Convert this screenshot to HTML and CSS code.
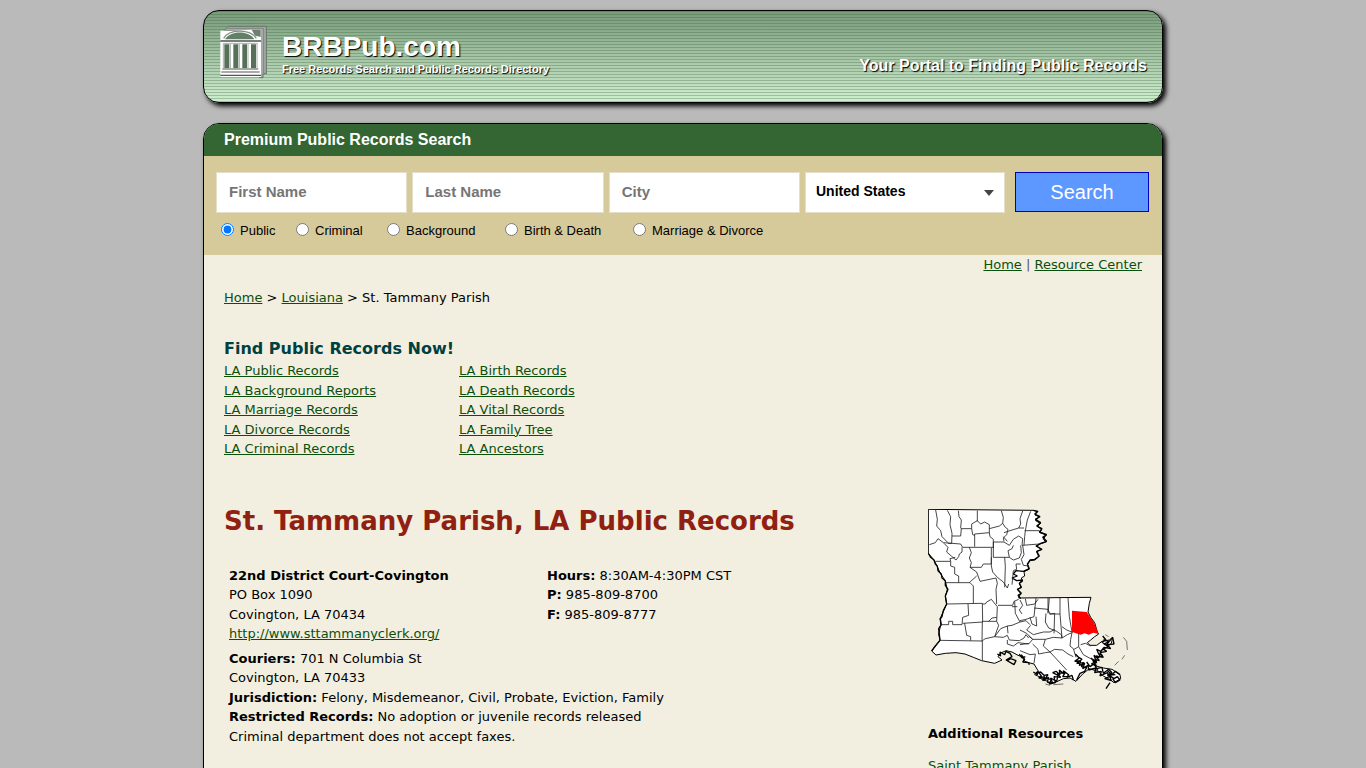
FILE: index.html
```html
<!DOCTYPE html>
<html lang="en">
<head>
<meta charset="utf-8">
<title>St. Tammany Parish, LA Public Records</title>
<link rel="stylesheet" href="styles.css">
</head>
<body>
<header class="banner">
  <svg class="logo" viewBox="0 0 144 162" aria-hidden="true">
    <path d="M18 14 28 4H142V146H132V158H122V17H18Z" fill="#a4aba5" stroke="#68726a" stroke-width="3"/>
    <path d="M26 10H134V150" fill="none" stroke="#7c877e" stroke-width="3"/>
    <path d="M98 17H122V40L108 34Z" fill="#6b806e"/>
    <path d="M4 17H38L98 14 108 32 126 36V156H4Z" fill="#fff"/>
    <path d="M14 40C30 12 92 10 112 40" fill="none" stroke="#858f87" stroke-width="4"/>
    <path d="M18 43C34 16 90 16 106 43Z" fill="#638066"/>
    <path d="M4 48H126" stroke="#4c544d" stroke-width="5"/>
    <path d="M12 55H116" stroke="#aab0ab" stroke-width="3"/>
    <path d="M16 58H31V130H16ZM43 58H58V130H43ZM70 58H84V130H70ZM96 58H111V130H96Z" fill="#56705a"/>
    <path d="M13 57V130M34 57V130M61 57V130M87 57V130M114 57V130" stroke="#a9afa9" stroke-width="3"/>
    <path d="M10 132H118M7 141H122" stroke="#8a908a" stroke-width="4"/>
    <path d="M4 151H126" stroke="#555" stroke-width="4"/>
  </svg>
  <div class="brand">
    <a class="brand-name" href="#">BRBPub.com</a>
    <p class="tagline">Free Records Search and Public Records Directory</p>
  </div>
  <p class="slogan">Your Portal to Finding Public Records</p>
</header>

<main class="page">
  <h2 class="search-title">Premium Public Records Search</h2>
  <form class="search">
    <div class="fields">
      <input class="field" type="text" placeholder="First Name" aria-label="First Name">
      <input class="field" type="text" placeholder="Last Name" aria-label="Last Name">
      <input class="field" type="text" placeholder="City" aria-label="City">
      <div class="select-wrap">
        <select class="state" aria-label="State"><option>United States</option></select>
        <svg class="arrow" viewBox="0 0 10 6" aria-hidden="true"><path d="M0 0H10L5 6Z" fill="#444"/></svg>
      </div>
      <button class="submit" type="submit">Search</button>
    </div>
    <div class="types">
      <label class="type"><input type="radio" name="type" checked>Public</label>
      <label class="type"><input type="radio" name="type">Criminal</label>
      <label class="type"><input type="radio" name="type">Background</label>
      <label class="type"><input type="radio" name="type">Birth &amp; Death</label>
      <label class="type"><input type="radio" name="type">Marriage &amp; Divorce</label>
    </div>
  </form>

  <div class="content">
    <nav class="top-nav"><a href="#">Home</a> <span class="bar">|</span> <a href="#">Resource Center</a></nav>
    <nav class="crumbs"><a href="#">Home</a> &gt; <a href="#">Louisiana</a> &gt; St. Tammany Parish</nav>

    <section class="find">
      <h3 class="find-title">Find Public Records Now!</h3>
      <div class="find-lists">
        <ul class="links">
          <li><a href="#">LA Public Records</a></li>
          <li><a href="#">LA Background Reports</a></li>
          <li><a href="#">LA Marriage Records</a></li>
          <li><a href="#">LA Divorce Records</a></li>
          <li><a href="#">LA Criminal Records</a></li>
        </ul>
        <ul class="links">
          <li><a href="#">LA Birth Records</a></li>
          <li><a href="#">LA Death Records</a></li>
          <li><a href="#">LA Vital Records</a></li>
          <li><a href="#">LA Family Tree</a></li>
          <li><a href="#">LA Ancestors</a></li>
        </ul>
      </div>
    </section>

    <div class="columns">
      <article class="county">
        <h1 class="county-title">St. Tammany Parish, LA Public Records</h1>
        <div class="court">
          <div class="court-top">
            <p><b>22nd District Court-Covington</b><br>PO Box 1090<br>Covington, LA 70434<br><a href="#">http://www.sttammanyclerk.org/</a></p>
            <p><b>Hours:</b> 8:30AM-4:30PM CST<br><b>P:</b> 985-809-8700<br><b>F:</b> 985-809-8777</p>
          </div>
          <p><b>Couriers:</b> 701 N Columbia St<br>Covington, LA 70433<br><b>Jurisdiction:</b> Felony, Misdemeanor, Civil, Probate, Eviction, Family<br><b>Restricted Records:</b> No adoption or juvenile records released<br>Criminal department does not accept faxes.</p>
        </div>
      </article>
      <aside class="side">
        <svg class="map" viewBox="24 27 606 540" role="img" aria-label="Map of Louisiana parishes">
          <path d="M25 28 340 31 352 35 345 45 357 50 347 62 361 70 352 80 365 88 360 98 378 105 370 118 378 126 360 132 350 138 364 148 350 155 356 170 345 180 330 182 322 195 327 208 312 215 314 228 304 234 308 244 298 250 304 262 292 268 302 280 296 294 513 292 508 310 504 336 512 352 524 368 532 396 536 402 524 410 512 420 502 428 510 436 530 436 546 424 568 420 578 412 574 430 560 442 544 452 538 468 526 482 528 498 550 504 576 508 600 524 602 536 582 548 572 540 550 528 534 514 508 506 488 522 468 544 450 534 430 536 408 546 388 550 372 536 344 524 354 512 342 492 326 488 314 484 306 470 294 466 276 456 258 452 240 460 234 470 246 480 224 490 185 482 160 472 135 462 108 458 76 460 48 465 35 453 46 438 60 421 56 402 62 374 62 352 72 330 80 312 76 288 82 270 76 242 62 222 50 196 42 180 25 160Z" fill="#fff" stroke="#000" stroke-width="3"/>
          <path d="M25 160 32 172 42 180 46 192 52 198 54 212 64 222 66 234 76 242 76 256 84 268 76 288 80 312 70 332 66 350 60 356 64 374 56 386 60 421 46 438 35 453M340 31 354 34 344 42 360 50 346 58 362 68 350 78 366 86 358 96 380 104 368 112 380 124 362 130 348 138 366 148 350 154 358 168 344 178 330 180 322 192 328 206 310 214 288 212 280 222 292 228 276 234 290 242 308 240 298 250 304 262 292 268 304 280 294 286 302 296" fill="none" stroke="#000" stroke-width="4" stroke-linejoin="bevel"/>
          <g fill="none" stroke="#222" stroke-width="2.5">
            <path d="M47 30 52 58 50 78 62 92 66 110 84 128M82 31 92 50 90 74 96 100 95 130 84 130M115 32 117 50 124 60 122 84M172 32V64M244 32 250 52 248 70 256 82 264 88 260 104 250 114 252 124M332 34 322 60 316 92 314 110 312 136M308 33 300 56 302 72 296 84"/>
            <path d="M122 86H155V72L172 62 182 72 194 66 208 74V98L164 102V140M155 86 158 104 164 106M208 86 238 78 248 70M208 98 210 110 220 118V144M96 108 122 108 124 86M252 98 270 92 296 84 312 84M314 92H358M250 110 262 124M220 126 252 126 268 136 280 118 296 108 308 116 306 136 358 132"/>
            <path d="M28 134 46 128 54 116 70 128 96 130 122 132 128 142H220M72 130 84 142 80 156 94 168 108 180 116 170 118 162 126 156 126 142M148 142 154 158 148 174 154 188 150 202 184 202 190 192 214 192 214 144M220 126V172H268L264 152 276 146 280 136M268 172 280 180 298 174 304 158 302 136M308 136 312 164 304 178 310 196 326 198M214 172V198L218 216 232 232 250 246 262 264 266 252M254 172 256 200 254 262M46 184H92L90 176 106 172M92 184V198L104 202V222L116 228V248M150 202 170 216 180 244 228 234M170 228 148 248M78 248H150L160 258V310M228 234 232 250 228 268 230 312M276 254 280 212 290 208 288 192 302 192"/>
            <path d="M80 312 187 310M144 312 146 346 128 352 126 374M60 374 86 374V364H98V374H126M187 310 188 366 128 370M187 366 186 424M134 370 140 406 152 410V422M60 421 187 423V482M187 364 230 364 232 320 214 298 200 306 196 312 187 312M234 316H278L282 304 296 298M206 364 216 354 230 352M230 364 236 376 224 410 196 416 187 422M284 304 286 340 300 366 318 362 330 374M300 366 276 376 262 378 242 386 224 410 250 412 262 406 268 420 298 422 312 414 318 404 326 414M262 378 264 400M262 420 262 432 280 438 294 428 326 432M300 300 308 316 298 330 306 342M276 320H292M316 296 320 316 344 312 354 298"/>
            <path d="M348 294 342 350 318 358 300 362M342 324 384 328 390 342 404 340 402 400M384 294V338M330 352 336 372 350 378 348 350M332 376 320 390 340 404 370 396 390 396 404 388M378 340 376 366 386 384 410 394 424 404 426 414 400 412 376 418 338 418 326 408M388 342H420M388 294 384 340M420 294V342L426 414M444 294 448 350 456 396 458 398M300 390 320 400 338 418 328 430 300 434M338 432 354 448 356 462 376 458 390 456 440 510M376 418 370 438 390 456 404 448 428 450 444 462 460 470M426 380 440 390 456 396M426 414 442 404 456 398 452 418 450 438 460 446 468 472M476 402V440L462 448M482 434 496 430 512 438M476 440 490 464 512 476 524 482M300 452 330 464 346 462 342 490"/>
          </g>
          <path d="M456 332 500 336 510 350 520 364 528 382 536 402 520 398 506 404 494 400 482 404 456 396Z" fill="#f00"/>
          <g fill="none" stroke="#000" stroke-width="4" stroke-linejoin="bevel">
            <path d="M548 408 558 420 546 426 558 436 578 412 582 432 562 434 572 446 552 442 542 454 530 448 536 462 548 466 532 474 522 466 530 488 518 480 526 496M550 420 568 424 552 432 566 440 548 446 560 454 540 458 550 472 528 468 538 482 524 478M512 474 528 484 514 492 530 498"/>
            <path d="M466 462 478 474 464 484 482 482 478 496 494 490 488 506 504 496 506 510 528 504 524 518 544 514 540 528 562 518 568 530 554 536 574 542 568 526 582 536 592 530 600 540 586 548 578 536M560 510 576 524 586 514 600 524M570 548 558 566M470 468 486 478 470 490 492 488 484 500 500 502 494 514 480 520 470 540M530 506 546 502 550 520 566 508 576 518 562 526 586 524M500 486 510 500 522 492 534 512"/>
            <path d="M340 516 352 524 354 514 364 528 356 534 374 530 368 542 386 532 382 546 398 550 392 534 410 544 414 526 398 518 408 514 420 524 418 510 432 522 430 512 446 524 440 532 456 526 460 540M346 520 362 516 372 526 384 524 376 536 394 538 388 552 406 548 402 530 422 532 412 520 436 518 428 530 450 530M360 534 376 542 372 532M232 462 242 468 240 456 254 464 258 454 270 460 276 470 258 480 282 494 288 482 272 476 262 482M304 464 314 478 308 486 326 488 328 494M298 462 306 474 316 470"/>
          </g>
          <path d="M610 412 620 424 622 450M614 466 606 478M596 484 584 496M376 552 390 556M400 554 430 552M556 404 566 410" fill="none" stroke="#333" stroke-width="2"/>
        </svg>
        <h4 class="side-title">Additional Resources</h4>
        <p><a href="#">Saint Tammany Parish</a></p>
      </aside>
    </div>
  </div>
</main>
</body>
</html>
```
FILE: styles.css
```css
* { box-sizing: border-box; }
body {
  margin: 0;
  padding: 10px 20px 0;
  background: #bababa;
  color: #000;
  font: 13px/1.5 Verdana, "DejaVu Sans", sans-serif;
}
p, h1, h2, h3, h4, ul { margin: 0; padding: 0; }
a { color: #0c4f0c; }

.banner, .page {
  max-width: 960px;
  margin: 0 auto 20px;
  border: 1px solid #000;
  box-shadow: 3px 3px 5px #000;
}
.banner {
  display: flex;
  align-items: flex-start;
  padding: 14px 15px 23px;
  border-radius: 16px;
  background:
    repeating-linear-gradient(rgba(50, 95, 50, .3) 0 1px, transparent 1px 3px),
    linear-gradient(#789a7a, #d0eed0);
  color: #fff;
  font-family: "Liberation Sans", Arial, sans-serif;
  font-weight: bold;
  text-shadow: 1px 1px 1px #000;
}
.logo { width: 48px; height: 54px; }
.brand { margin: 7px auto 0 15px; }
.brand-name {
  display: block;
  color: #fff;
  font-size: 28px;
  line-height: 30px;
  text-decoration: none;
}
.tagline { font-size: 11px; line-height: 14px; }
.slogan { margin-top: 31px; font-size: 16px; line-height: 20px; }

.page {
  overflow: hidden;
  border-radius: 16px 16px 0 0;
  background: #f2efe0;
}
.search-title {
  padding: 0 20px;
  background: #336633;
  color: #fff;
  font: bold 16px/32px "Liberation Sans", Arial, sans-serif;
}
.search {
  padding: 16px 13px 14px 12px;
  background: #d6ca9a;
  font-family: "Liberation Sans", Arial, sans-serif;
}
.fields {
  display: grid;
  grid-template-columns: 1fr 1fr 1fr 200px 139px;
  gap: 5px;
}
.field, .state {
  width: 100%;
  height: 41px;
  border: 1px solid #e4dfc8;
  border-radius: 0;
  background: #fff;
  font: bold 15px "Liberation Sans", Arial, sans-serif;
}
.field { padding: 0 12px 2px; }
.field::placeholder { color: #757575; }
.select-wrap { position: relative; }
.state {
  appearance: none;
  padding: 0 10px 3px;
  color: #000;
  font-size: 14px;
}
.arrow {
  position: absolute;
  top: 18px;
  right: 11px;
  width: 10px;
  height: 6px;
  pointer-events: none;
}
.submit {
  height: 40px;
  margin-left: 5px;
  border: 1px solid #0000c0;
  background: #5c98ff;
  color: #fff;
  font: 20px "Liberation Sans", Arial, sans-serif;
}
.types {
  display: grid;
  grid-template-columns: 75px 91px 118px 128px auto;
  padding: 8px 5px 0;
}
.type {
  display: flex;
  align-items: center;
  gap: 6px;
  line-height: 20px;
}
.type input { width: 13px; height: 13px; margin: 0 0 4px; }

.content { padding: 0 20px 40px; }
.top-nav { text-align: right; }
.bar { color: #555; }
.crumbs { margin-top: 13px; }
.find { margin-top: 30px; }
.find-title { color: #004040; font-size: 16px; }
.find-lists { display: grid; grid-template-columns: 230px 1fr; gap: 5px; }
.links { list-style: none; }
.columns {
  display: grid;
  grid-template-columns: 1fr 214px;
  margin-top: 43px;
}
.county-title { color: #902010; font-size: 26px; }
.court { padding: 25px 5px 0; }
.court-top {
  display: grid;
  grid-template-columns: 318px 1fr;
  margin-bottom: 5px;
}
.side { padding-top: 7px; }
.map { display: block; width: 202px; height: 180px; }
.side-title { margin: 35px 0 13px; font-size: 13px; }
```
